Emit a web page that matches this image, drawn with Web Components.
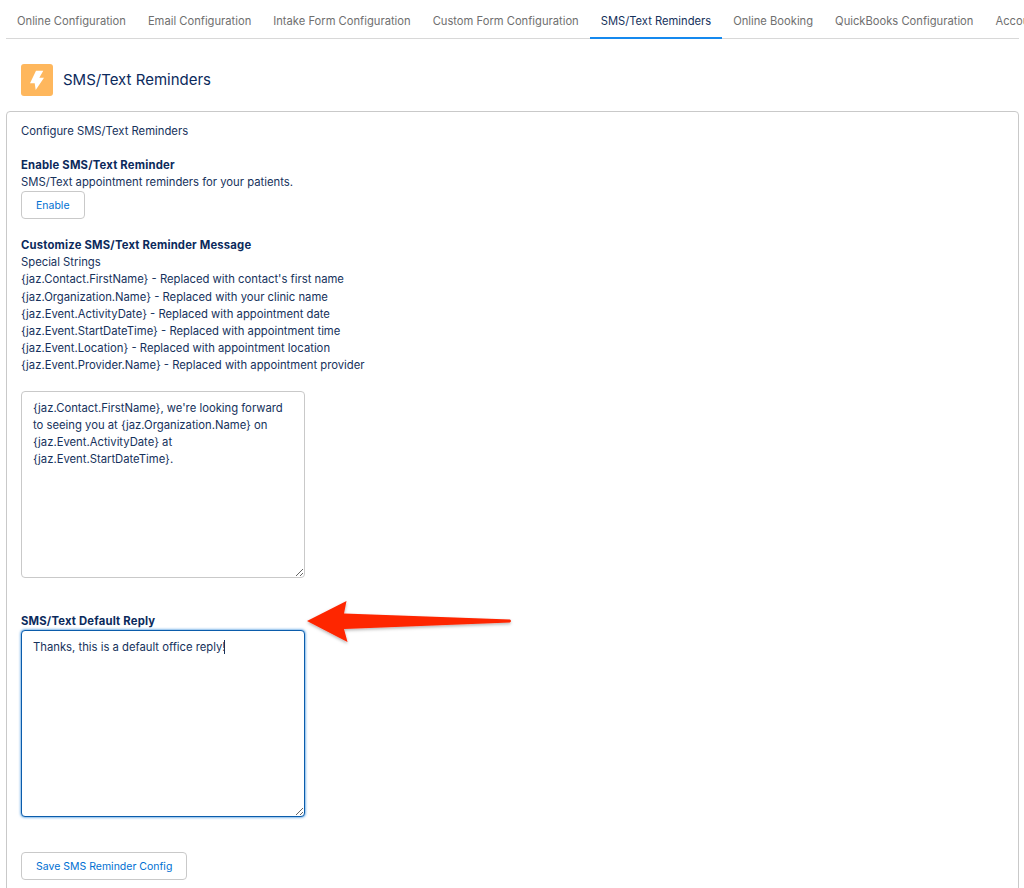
<!DOCTYPE html>
<html lang="en">
<head>
<meta charset="utf-8">
<title>SMS/Text Reminders</title>
<style>
  html, body { margin: 0; background: #fff; }
  body { font-family: Inter, "Liberation Sans", sans-serif; font-size: 11.2px; color: #16325c; height: 888px; overflow: hidden; }
  settings-page { display: block; }
</style>
</head>
<body>
<settings-page>
  <tab-bar slot="tabs">
    <tab-item>Online Configuration</tab-item>
    <tab-item>Email Configuration</tab-item>
    <tab-item>Intake Form Configuration</tab-item>
    <tab-item>Custom Form Configuration</tab-item>
    <tab-item active>SMS/Text Reminders</tab-item>
    <tab-item>Online Booking</tab-item>
    <tab-item>QuickBooks Configuration</tab-item>
    <tab-item>Account</tab-item>
  </tab-bar>
  <page-header slot="header">SMS/Text Reminders</page-header>
  <config-card slot="card">
    <card-title>Configure SMS/Text Reminders</card-title>
    <config-section heading="Enable SMS/Text Reminder">
      <div>SMS/Text appointment reminders for your patients.</div>
      <action-button>Enable</action-button>
    </config-section>
    <config-section heading="Customize SMS/Text Reminder Message" class="custom">
      <div>Special Strings</div>
      <div>{jaz.Contact.FirstName} - Replaced with contact's first name</div>
      <div>{jaz.Organization.Name} - Replaced with your clinic name</div>
      <div>{jaz.Event.ActivityDate} - Replaced with appointment date</div>
      <div>{jaz.Event.StartDateTime} - Replaced with appointment time</div>
      <div>{jaz.Event.Location} - Replaced with appointment location</div>
      <div>{jaz.Event.Provider.Name} - Replaced with appointment provider</div>
    </config-section>
    <message-box value="{jaz.Contact.FirstName}, we're looking forward to seeing you at {jaz.Organization.Name} on {jaz.Event.ActivityDate} at {jaz.Event.StartDateTime}."></message-box>
    <config-section heading="SMS/Text Default Reply" class="reply">
      <message-box focused value="Thanks, this is a default office reply!"></message-box>
    </config-section>
    <action-button class="save">Save SMS Reminder Config</action-button>
  </config-card>
  <red-arrow slot="overlay"></red-arrow>
</settings-page>

<script>
function shadow(el, html) {
  el.attachShadow({ mode: 'open' }).innerHTML = html;
}

class SettingsPage extends HTMLElement {
  constructor() {
    super();
    shadow(this, `<style>
      :host { display: block; position: relative; padding: 0 5px 0 6px; }
    </style>
    <slot name="tabs"></slot>
    <slot name="header"></slot>
    <slot name="card"></slot>
    <slot name="overlay"></slot>`);
  }
}

class TabBar extends HTMLElement {
  constructor() {
    super();
    shadow(this, `<style>
      :host { display: flex; height: 38px; border-bottom: 1px solid #d8d8d8; }
    </style><slot></slot>`);
  }
}

class TabItem extends HTMLElement {
  constructor() {
    super();
    shadow(this, `<style>
      :host { display: block; flex: none; height: 39px; box-sizing: border-box; padding: 14px 11px 0;
        line-height: 15px; color: #6f6f6f; white-space: nowrap; }
      :host([active]) { color: #16325c; border-bottom: 2px solid #1589ee; }
    </style><slot></slot>`);
  }
}

class PageHeader extends HTMLElement {
  constructor() {
    super();
    shadow(this, `<style>
      :host { display: flex; align-items: center; gap: 10px; height: 32px; padding: 25px 0 15px 15px;
        font-size: 15px; color: #0b2a5c; }
      svg { display: block; width: 32px; height: 32px; }
      span { margin-bottom: 2px; }
    </style>
    <svg viewBox="0 0 32 32">
      <rect width="32" height="32" rx="3" fill="#feb75d"/>
      <path d="M15 6.7h7.3l-4 7H23L14.7 26l-1-6.7H9z" fill="#fff"/>
    </svg>
    <span><slot></slot></span>`);
  }
}

class ConfigCard extends HTMLElement {
  constructor() {
    super();
    shadow(this, `<style>
      :host { display: block; height: 800px; box-sizing: border-box; padding: 11px 14px 0;
        border: 1px solid #c9c9c9; border-radius: 4px; font-size: 11.27px; line-height: 17.1px; }
    </style><slot></slot>`);
  }
}

class CardTitle extends HTMLElement {
  constructor() {
    super();
    shadow(this, `<style>:host { display: block; margin-bottom: 17px; }</style><slot></slot>`);
  }
}

class ConfigSection extends HTMLElement {
  constructor() {
    super();
    shadow(this, `<style>
      :host { display: block; margin-bottom: 18px; }
      :host(.custom) { margin-bottom: 17px; }
      :host(.reply) { margin-top: 35px; margin-bottom: 35px; }
      h3 { margin: 0; font: inherit; font-weight: 700; letter-spacing: .2px; color: #0b2a5c; }
    </style>
    <h3></h3><slot></slot>`);
    this.shadowRoot.querySelector('h3').textContent = this.getAttribute('heading');
  }
}

class ActionButton extends HTMLElement {
  constructor() {
    super();
    shadow(this, `<style>
      :host { display: block; width: max-content; box-sizing: border-box; height: 28px; padding: 0 14px;
        border: 1px solid #c9c9c9; border-radius: 4px; background: #fff; color: #0070d2;
        font-size: 10.5px; line-height: 27px; }
    </style><slot></slot>`);
  }
}

class MessageBox extends HTMLElement {
  constructor() {
    super();
    shadow(this, `<style>
      :host { display: block; position: relative; width: 284px; height: 187px; }
      textarea { display: block; width: 100%; height: 100%; box-sizing: border-box; margin: 0;
        padding: 8px 11px; border: 1px solid #c9c9c9; border-radius: 4px; outline: none; resize: vertical;
        background: #fff; color: #16325c; font: inherit; line-height: 17.1px; }
      :host([focused]) textarea { border-color: #0b5cab; box-shadow: 0 0 3px #0070d2; }
      .caret { display: none; position: absolute; left: 203px; top: 10px; width: 1px; height: 14px; background: #16325c; }
      :host([focused]) .caret { display: block; }
    </style><textarea></textarea><div class="caret"></div>`);
    this.shadowRoot.querySelector('textarea').textContent = this.getAttribute('value');
  }
}

class RedArrow extends HTMLElement {
  constructor() {
    super();
    // annotation drawn over the page
    shadow(this, `<style>
      :host { position: absolute; left: 300px; top: 596px; width: 216px; height: 50px; }
      svg { display: block; overflow: visible; }
    </style>
    <svg width="216" height="50" viewBox="0 0 216 50">
      <defs><filter id="s" x="-5%" y="-20%" width="110%" height="150%"><feDropShadow dx="0" dy="1.5" stdDeviation="1.5" flood-color="#000" flood-opacity=".3"/></filter></defs>
      <path d="M7 25 46.5 5 44 17.5 210 23.5Q212 25 210 26.5L44 33 47.5 46z" fill="#fe2500" filter="url(#s)"/>
    </svg>`);
  }
}

customElements.define('settings-page', SettingsPage);
customElements.define('tab-bar', TabBar);
customElements.define('tab-item', TabItem);
customElements.define('page-header', PageHeader);
customElements.define('config-card', ConfigCard);
customElements.define('card-title', CardTitle);
customElements.define('config-section', ConfigSection);
customElements.define('action-button', ActionButton);
customElements.define('message-box', MessageBox);
customElements.define('red-arrow', RedArrow);
</script>
</body>
</html>
